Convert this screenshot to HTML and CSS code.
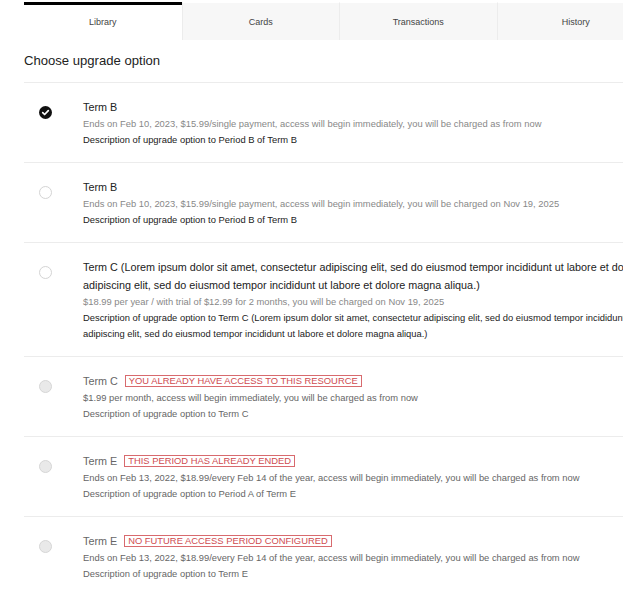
FILE: index.html
```html
<!DOCTYPE html>
<html lang="en">
<head>
    <meta charset="UTF-8">
    <meta name="viewport" content="width=device-width, initial-scale=1.0">
    <title>Upgrade</title>
    <link rel="stylesheet" href="styles.css">
</head>
<body>
    <div class="page">
        <nav class="tabs">
            <a class="tab active">Library</a>
            <a class="tab">Cards</a>
            <a class="tab">Transactions</a>
            <a class="tab">History</a>
        </nav>

        <h2 class="section-title">Choose upgrade option</h2>

        <ul class="options">
            <li class="option">
                <span class="radio checked">
                    <svg width="13" height="13" viewBox="0 0 13 13">
                        <circle cx="6.5" cy="6.5" r="6.5" fill="#111"/>
                        <polyline points="3.7,6.7 5.6,8.5 9.3,4.6" fill="none" stroke="#fff" stroke-width="1.7" stroke-linecap="round" stroke-linejoin="round"/>
                    </svg>
                </span>
                <div class="option-body">
                    <div class="option-title">Term B</div>
                    <div class="option-meta">Ends on Feb 10, 2023, $15.99/single payment, access will begin immediately, you will be charged as from now</div>
                    <div class="option-desc">Description of upgrade option to Period B of Term B</div>
                </div>
            </li>
            <li class="option">
                <span class="radio"></span>
                <div class="option-body">
                    <div class="option-title">Term B</div>
                    <div class="option-meta">Ends on Feb 10, 2023, $15.99/single payment, access will begin immediately, you will be charged on Nov 19, 2025</div>
                    <div class="option-desc">Description of upgrade option to Period B of Term B</div>
                </div>
            </li>
            <li class="option">
                <span class="radio"></span>
                <div class="option-body">
                    <div class="option-title">Term C (Lorem ipsum dolor sit amet, consectetur adipiscing elit, sed do eiusmod tempor incididunt ut labore et dolore magna aliqua. Lorem ipsum dolor sit amet, consectetur adipiscing elit, sed do eiusmod tempor incididunt ut labore et dolore magna aliqua.)</div>
                    <div class="option-meta">$18.99 per year / with trial of $12.99 for 2 months, you will be charged on Nov 19, 2025</div>
                    <div class="option-desc">Description of upgrade option to Term C (Lorem ipsum dolor sit amet, consectetur adipiscing elit, sed do eiusmod tempor incididunt ut labore et dolore magna aliqua. Lorem ipsum dolor sit amet, consectetur adipiscing elit, sed do eiusmod tempor incididunt ut labore et dolore magna aliqua.)</div>
                </div>
            </li>
            <li class="option disabled">
                <span class="radio"></span>
                <div class="option-body">
                    <div class="option-title">Term C <span class="tag">You already have access to this resource</span></div>
                    <div class="option-meta">$1.99 per month, access will begin immediately, you will be charged as from now</div>
                    <div class="option-desc">Description of upgrade option to Term C</div>
                </div>
            </li>
            <li class="option disabled">
                <span class="radio"></span>
                <div class="option-body">
                    <div class="option-title">Term E <span class="tag">This period has already ended</span></div>
                    <div class="option-meta">Ends on Feb 13, 2022, $18.99/every Feb 14 of the year, access will begin immediately, you will be charged as from now</div>
                    <div class="option-desc">Description of upgrade option to Period A of Term E</div>
                </div>
            </li>
            <li class="option disabled">
                <span class="radio"></span>
                <div class="option-body">
                    <div class="option-title">Term E <span class="tag">No future access period configured</span></div>
                    <div class="option-meta">Ends on Feb 13, 2022, $18.99/every Feb 14 of the year, access will begin immediately, you will be charged as from now</div>
                    <div class="option-desc">Description of upgrade option to Term E</div>
                </div>
            </li>
        </ul>
    </div>
</body>
</html>
```

FILE: styles.css
```css
html, body {
    margin: 0;
    padding: 0;
    overflow: hidden;
}

body {
    font-family: "Liberation Sans", Arial, sans-serif;
    background-color: #ffffff;
    color: #222;
}

.page {
    width: 960px;
    padding-left: 24px;
}

/* tab bar */
.tabs {
    display: flex;
    margin-top: 2px;
}

.tab {
    box-sizing: border-box;
    width: 157.5px;
    height: 38px;
    display: flex;
    align-items: center;
    justify-content: center;
    background-color: #f7f7f7;
    border-left: 1px solid #ececec;
    border-top: 1px solid #fff;
    font-size: 9px;
    color: #444;
    cursor: pointer;
}

.tab.active {
    background-color: #fff;
    border-left: none;
    border-top: 3px solid #000;
    padding-bottom: 1px;
}

.section-title {
    margin: 0;
    padding: 13px 0 14px;
    font-size: 13.1px;
    line-height: 15px;
    font-weight: normal;
    color: #222;
}

/* option list */
.options {
    list-style: none;
    margin: 0;
    padding: 0;
}

.option {
    display: flex;
    padding: 15px 0 14px 15px;
    border-top: 1px solid #ececec;
}

.radio {
    box-sizing: border-box;
    flex-shrink: 0;
    width: 13px;
    height: 13px;
    margin-top: 8px;
    margin-right: 31px;
    border: 1px solid #d4d4d4;
    border-radius: 50%;
    background-color: #fff;
}

.radio.checked {
    border: none;
}

.radio svg {
    display: block;
}

.option-body {
    width: 866px;
}

.option-title {
    font-size: 10.8px;
    line-height: 18px;
    color: #222;
}

.option-meta {
    font-size: 9.4px;
    line-height: 16px;
    color: #888;
}

.option-desc {
    font-size: 9.4px;
    line-height: 16px;
    color: #222;
}

/* options that can't be picked */
.option.disabled .radio {
    background-color: #e9e9e9;
    border-color: #d6d6d6;
}

.option.disabled .option-title {
    color: #666;
}

.option.disabled .option-meta,
.option.disabled .option-desc {
    color: #666;
}

.tag {
    display: inline-block;
    margin-left: 4px;
    padding: 0 3px;
    border: 1px solid #d86a6e;
    font-size: 9.4px;
    line-height: 10px;
    text-transform: uppercase;
    color: #cf4b50;
    vertical-align: 1px;
}
```
